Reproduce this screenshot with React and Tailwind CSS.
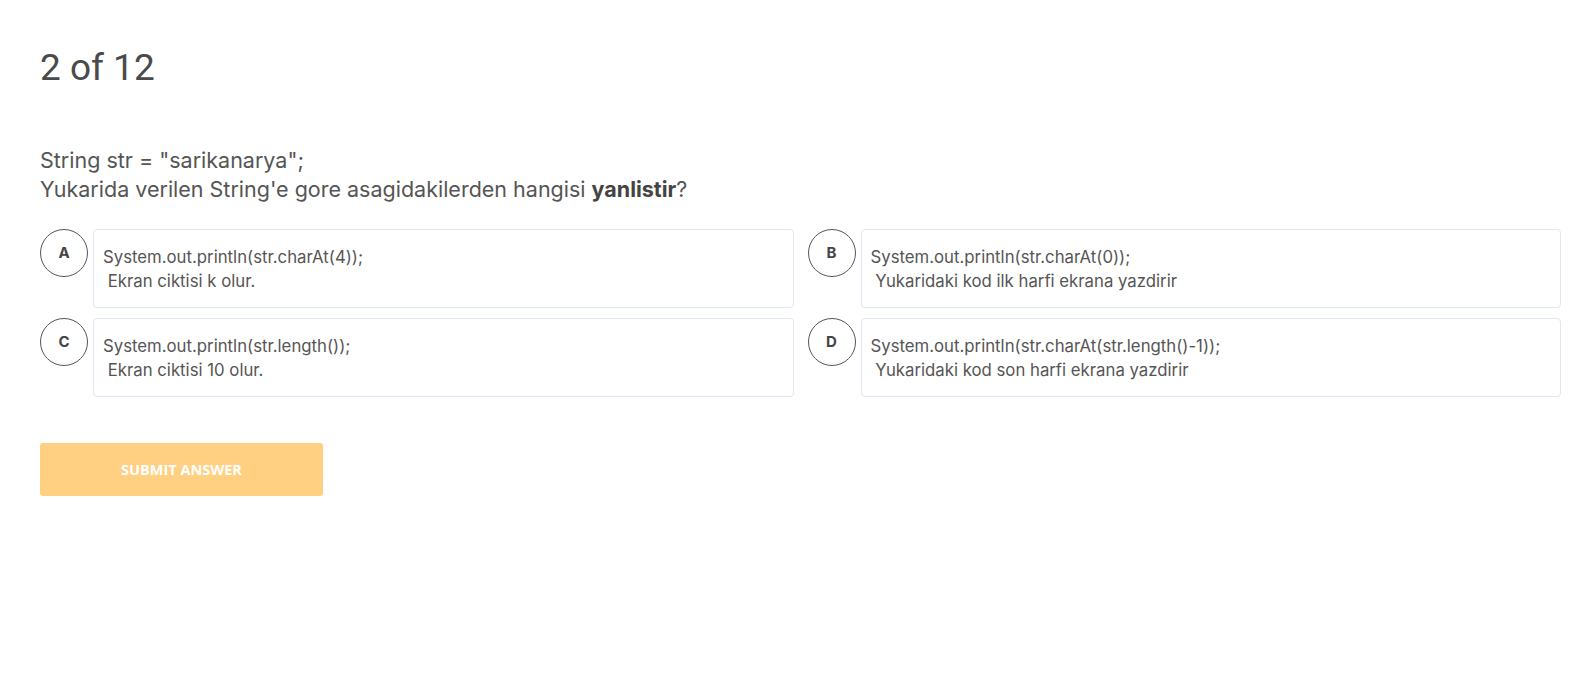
import React from 'react';

// Quiz question card — "2 of 12"
const options = [
  { key: 'A', code: 'System.out.println(str.charAt(4));', note: 'Ekran ciktisi k olur.' },
  { key: 'B', code: 'System.out.println(str.charAt(0));', note: 'Yukaridaki kod ilk harfi ekrana yazdirir' },
  { key: 'C', code: 'System.out.println(str.length());', note: 'Ekran ciktisi 10 olur.' },
  { key: 'D', code: 'System.out.println(str.charAt(str.length()-1));', note: 'Yukaridaki kod son harfi ekrana yazdirir' },
];

function Option({ opt }) {
  return (
    <div className="flex items-start">
      <div className="w-[48px] h-[48px] shrink-0 rounded-full border border-[#555] flex items-center justify-center text-[15px] font-bold text-[#444] font-['Inter',sans-serif]">
        {opt.key}
      </div>
      <div className="flex-1 ml-[5px] border border-[#dde8f4] rounded-[4px] px-[9px] pt-[15px] pb-[14px] text-[16.75px] leading-[24px] text-[#555] font-['Inter',sans-serif] whitespace-pre">
        <div>{opt.code}</div>
        <div>{' ' + opt.note}</div>
      </div>
    </div>
  );
}

export default function App() {
  return (
    <div className="min-h-screen bg-white pl-10 pr-8 pt-[42px] font-['Inter',sans-serif]">
      <h1 className="text-[37px] leading-[52px] font-normal text-[#4a4a4a] font-['Roboto',sans-serif]">2 of 12</h1>

      <p className="mt-[52px] text-[21.5px] leading-[29px] text-[#555]">
        String str = "sarikanarya";
        <br />
        Yukarida verilen String'e gore asagidakilerden hangisi <b className="font-bold text-[#444]">yanlistir</b>?
      </p>

      <div className="mt-[25px] grid grid-cols-2 gap-x-[14px] gap-y-[10px]">
        {options.map(o => (
          <Option key={o.key} opt={o} />
        ))}
      </div>

      <button className="mt-[46px] w-[283px] h-[53px] rounded-[3px] bg-[#ffd081] text-white text-[14.5px] font-bold uppercase font-['Open_Sans',sans-serif]">
        Submit Answer
      </button>
    </div>
  );
}
